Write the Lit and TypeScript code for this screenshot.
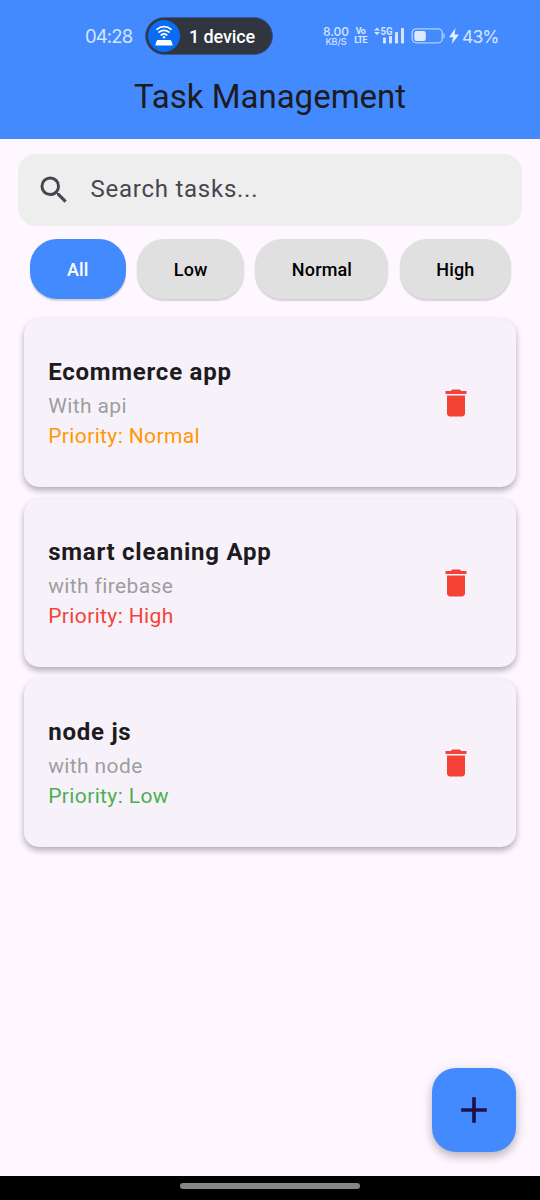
import { LitElement, html, css } from "lit";
import { customElement, property, state } from "lit/decorators.js";
import { classMap } from "lit/directives/class-map.js";

type Priority = "Low" | "Normal" | "High";
interface Task {
  title: string;
  note: string;
  priority: Priority;
}

@customElement("status-bar")
class StatusBar extends LitElement {
  static styles = css`
    :host {
      display: flex;
      align-items: center;
      height: 72px;
      box-sizing: border-box;
      padding: 0 0 0 85px;
      color: #d5e5ff;
      font-family: Roboto, sans-serif;
    }
    :host > * {
      flex: none;
    }
    .time {
      width: 60px;
      font: 400 18.5px/22px Inter, sans-serif;
      letter-spacing: -0.9px;
    }
    .pill {
      display: flex;
      align-items: center;
      width: 128px;
      height: 38px;
      box-sizing: border-box;
      padding: 0 2px;
      border: 1px solid #34569a;
      border-radius: 19px;
      background: #30353f;
      color: #fff;
      font-size: 18px;
      font-weight: 500;
      letter-spacing: -0.1px;
      white-space: nowrap;
    }
    .hotspot {
      display: block;
      flex: none;
      width: 32px;
      height: 32px;
      margin-right: 9px;
    }
    .rate {
      width: 28px;
      margin-left: 49px;
      display: flex;
      flex-direction: column;
      align-items: center;
      font: 500 12px/12px Inter, sans-serif;
      white-space: nowrap;
    }
    .rate .unit {
      font-size: 9px;
      line-height: 8px;
    }
    .volte {
      width: 13px;
      margin-left: 4px;
      display: flex;
      flex-direction: column;
      align-items: center;
      font: 700 9px/9px Roboto, sans-serif;
      letter-spacing: -0.6px;
    }
    .signal {
      width: 32px;
      height: 20px;
      margin-left: 7px;
    }
    .battery {
      width: 35px;
      height: 18px;
      margin-left: 5px;
    }
    .bolt {
      width: 12px;
      height: 18px;
      margin-left: 2px;
    }
    .percent {
      margin-left: 2px;
      padding-top: 1px;
      font: 400 17.5px/22px Inter, sans-serif;
      letter-spacing: -0.9px;
    }
  `;
  render() {
    return html`
      <span class="time">04:28</span>
      <span class="pill">
        <svg class="hotspot" viewBox="0 0 32 32">
          <circle cx="16" cy="16" r="16" fill="#0a6cf5" />
          <g fill="none" stroke="#fff" stroke-width="1.7" stroke-linecap="round">
            <path d="M9 9.300a10.800 10.800 0 0 1 14 0" />
            <path d="M11 12.200a7.500 7.500 0 0 1 10 0" />
            <path d="M13.300 15a4.200 4.200 0 0 1 5.400 0" />
          </g>
          <circle cx="16" cy="17.300" r="1.200" fill="#fff" />
          <path d="M10 20h12q1 0 1.400 1l1.200 3.400q.4 1.100-.8 1.100H8.200q-1.200 0-.8-1.100L8.600 21q.4-1 1.400-1z" fill="#fff" />
        </svg>
        1 device
      </span>
      <span class="rate"><span>8.00</span><span class="unit">KB/S</span></span>
      <span class="volte"><span>Vo</span><span>LTE</span></span>
      <svg class="signal" viewBox="0 0 32 20" fill="#d5e5ff">
        <path d="M0 4.500 3 1.500 6 4.500zM0 6 3 9 6 6z" />
        <text x="6.500" y="9" font-family="Roboto" font-weight="700" font-size="10.5" textLength="12" lengthAdjust="spacingAndGlyphs">5G</text>
        <rect x="9" y="11.500" width="3" height="6" rx=".8" />
        <rect x="15" y="10" width="3" height="7.500" rx=".8" />
        <rect x="21" y="6" width="3" height="11.500" rx=".8" />
        <rect x="27" y="2" width="3" height="15.500" rx=".8" />
      </svg>
      <svg class="battery" viewBox="0 0 35 18">
        <rect x="1.200" y="1.800" width="30" height="14" rx="4" fill="none" stroke="#b4d0ff" stroke-width="1.300" />
        <rect x="3.300" y="3.900" width="11.500" height="10" rx="2" fill="#dceaff" />
        <path d="M32.500 6.500q1.600 2.300 0 4.700" fill="none" stroke="#b4d0ff" stroke-width="1.300" />
      </svg>
      <svg class="bolt" viewBox="0 0 12 18"><path d="M7.500 1 1 10.300h4L3.800 17 11 7.600H6.600z" fill="#e2edff" /></svg>
      <span class="percent">43%</span>
    `;
  }
}

@customElement("task-card")
class TaskCard extends LitElement {
  @property({ attribute: false }) task!: Task;
  static styles = css`
    :host {
      display: flex;
      align-items: center;
      justify-content: space-between;
      height: 168px;
      box-sizing: border-box;
      padding: 0 42px 0 24.2px;
      border-radius: 15px;
      background: #f7f2fa;
      box-shadow: 0 4px 6px rgba(0, 0, 0, 0.22), 0 2px 7px rgba(0, 0, 0, 0.1);
    }
    .body {
      display: flex;
      flex-direction: column;
      padding-bottom: 1px;
    }
    .title {
      font-size: 24px;
      line-height: 36px;
      font-weight: 700;
      letter-spacing: 0.75px;
      color: #1d1b20;
    }
    .note,
    .priority {
      font-size: 21px;
      line-height: 30px;
      letter-spacing: 0.375px;
      color: #9e9e9e;
    }
    .note {
      padding-top: 1px;
    }
    .Normal {
      color: #ff9800;
    }
    .High {
      color: #f44336;
    }
    .Low {
      color: #4caf50;
    }
    .delete {
      display: block;
      width: 36px;
      height: 36px;
    }
  `;
  render() {
    const t = this.task;
    return html`
      <div class="body">
        <div class="title">${t.title}</div>
        <div class="note">${t.note}</div>
        <div class=${classMap({ priority: true, [t.priority]: true })}>Priority: ${t.priority}</div>
      </div>
      <svg class="delete" viewBox="0 0 24 24" fill="#f44336">
        <path d="M6 19c0 1.100.9 2 2 2h8c1.100 0 2-.9 2-2V7H6v12zM19 4h-3.500l-1-1h-5l-1 1H5v2h14V4z" />
      </svg>
    `;
  }
}

@customElement("app-root")
class AppRoot extends LitElement {
  @state() private filter = "All";
  private tasks: Task[] = [
    { title: "Ecommerce app", note: "With api", priority: "Normal" },
    { title: "smart cleaning App", note: "with firebase", priority: "High" },
    { title: "node js", note: "with node", priority: "Low" },
  ];
  static styles = css`
    :host {
      display: flex;
      flex-direction: column;
      position: relative;
      height: 1200px;
      background: #fef7ff;
      font-family: Roboto, sans-serif;
    }
    .header {
      height: 139px;
      background: #448aff;
    }
    .heading {
      margin: 0;
      padding-top: 4px;
      text-align: center;
      font-size: 33px;
      line-height: 42px;
      font-weight: 400;
      color: #1d1b20;
    }
    .search {
      display: flex;
      align-items: center;
      gap: 18.500px;
      height: 72px;
      box-sizing: border-box;
      margin: 15px 18px 0;
      padding: 0 18px;
      border-radius: 18px;
      background: #eee;
      color: #49454f;
      font-size: 24px;
      letter-spacing: 0.75px;
    }
    .hint {
      padding-bottom: 2px;
    }
    .glass {
      width: 36px;
      height: 36px;
    }
    .filters {
      display: flex;
      justify-content: space-between;
      margin: 13.400px 29.500px 0 30px;
    }
    .chip {
      height: 60px;
      padding: 1px 36px 0 36.600px;
      border: 0;
      border-radius: 27px;
      background: #e0e0e0;
      color: #000;
      font: 500 18px/59px Roboto, sans-serif;
      letter-spacing: 0.15px;
      box-shadow: 0 1.500px 1.500px rgba(0, 0, 0, 0.16);
    }
    .chip.on {
      padding: 1px 37px 0;
      background: #448aff;
      color: #fff;
    }
    .list {
      display: flex;
      flex-direction: column;
      gap: 12px;
      flex: 1;
      padding: 19.600px 24px 0;
    }
    .fab {
      position: absolute;
      right: 24px;
      bottom: 48px;
      display: flex;
      align-items: center;
      justify-content: center;
      width: 84px;
      height: 84px;
      padding: 0;
      border: 0;
      border-radius: 24px;
      background: #448aff;
      box-shadow: 0 5px 8px rgba(0, 0, 0, 0.2), 0 2px 14px rgba(0, 0, 0, 0.1);
    }
    .plus {
      width: 44px;
      height: 44px;
    }
    .navbar {
      position: relative;
      display: flex;
      justify-content: center;
      height: 24px;
      background: #000;
    }
    .handle {
      width: 180px;
      height: 6px;
      margin-top: 7.400px;
      border-radius: 3px;
      background: #868686;
    }
  `;
  render() {
    const shown = this.tasks.filter((t) => this.filter === "All" || t.priority === this.filter);
    return html`
      <header class="header">
        <status-bar></status-bar>
        <h1 class="heading">Task Management</h1>
      </header>
      <div class="search">
        <svg class="glass" viewBox="0 0 24 24" fill="#49454f">
          <path d="M15.500 14h-.79l-.28-.27A6.471 6.471 0 0 0 16 9.500 6.500 6.500 0 1 0 9.500 16c1.610 0 3.090-.59 4.230-1.570l.27.28v.79l5 4.990L20.490 19l-4.990-5zm-6 0C7.010 14 5 11.990 5 9.500S7.010 5 9.500 5 14 7.010 14 9.500 11.990 14 9.500 14z" />
        </svg>
        <span class="hint">Search tasks...</span>
      </div>
      <div class="filters">
        ${["All", "Low", "Normal", "High"].map(
          (f) => html`<button class=${classMap({ chip: true, on: f === this.filter })} @click=${() => (this.filter = f)}>${f}</button>`
        )}
      </div>
      <main class="list">${shown.map((t) => html`<task-card .task=${t}></task-card>`)}</main>
      <button class="fab" aria-label="Add task">
        <svg class="plus" viewBox="0 0 24 24" fill="#211048"><path d="M19 13h-6v6h-2v-6H5v-2h6V5h2v6h6v2z" /></svg>
      </button>
      <div class="navbar"><div class="handle"></div></div>
    `;
  }
}
